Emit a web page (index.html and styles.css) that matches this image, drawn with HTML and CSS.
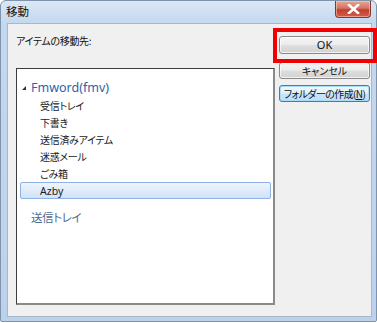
FILE: index.html
```html
<!DOCTYPE html>
<html lang="ja">
<head>
<meta charset="utf-8">
<title>移動</title>
<link rel="stylesheet" href="styles.css">
</head>
<body>
<div class="window">
  <div class="titlebar">
    <span class="title">移動</span>
    <div class="close"><svg width="13" height="10" viewBox="0 0 13 10"><path d="M2 1 L11 9 M11 1 L2 9" stroke="#fff" stroke-width="2.6" stroke-linecap="square"/></svg></div>
  </div>
  <div class="client">
    <div class="left">
      <div class="label">アイテムの移動先:</div>
      <div class="tree">
        <div class="root"><span class="arrow"></span>Fmword(fmv)</div>
        <div class="item">受信トレイ</div>
        <div class="item">下書き</div>
        <div class="item">送信済みアイテム</div>
        <div class="item">迷惑メール</div>
        <div class="item">ごみ箱</div>
        <div class="item selected">Azby</div>
        <div class="root2">送信トレイ</div>
      </div>
    </div>
    <div class="buttons">
      <div class="btn ok">OK</div>
      <div class="btn cancel">キャンセル</div>
      <div class="btn focus">フォルダーの作成(<u>N</u>)</div>
    </div>
    <div class="highlight"></div>
  </div>
</div>
</body>
</html>
```
FILE: styles.css
```css
* { box-sizing: border-box; }
html, body { margin: 0; padding: 0; }
body {
  width: 377px;
  height: 323px;
  background: #ffffff;
  font-family: "Noto Sans CJK JP", "Noto Sans", sans-serif;
  font-feature-settings: "palt";
}
.window {
  width: 377px;
  height: 322px;
  display: flex;
  flex-direction: column;
  background: linear-gradient(180deg, #dbe7f5 0px, #c4d8ef 22px, #bcd2ec 100%);
  border: 1px solid #7f93ab;
  border-radius: 6px 6px 2px 2px;
}
.titlebar {
  height: 21px;
  display: flex;
  align-items: flex-start;
  justify-content: space-between;
  padding-left: 5px;
  padding-right: 5px;
}
.title {
  font-size: 11.5px;
  line-height: 20px;
  color: #111;
}
.close {
  width: 36px;
  height: 17px;
  border: 1px solid #7d3a34;
  border-top: none;
  border-radius: 0 0 4px 4px;
  background: linear-gradient(180deg, #e8a593 0%, #d47462 45%, #c0402f 55%, #d45c4a 100%);
  display: flex;
  align-items: center;
  justify-content: center;
  box-shadow: inset 0 0 0 1px rgba(255,220,210,0.5);
}
.client {
  position: relative;
  flex: 1;
  margin: 1px 4px 4px 6px;
  background: #f0f0f0;
  border: 1px solid #aab7c6;
  display: flex;
  padding: 0 0 11px 8px;
}
.left {
  display: flex;
  flex-direction: column;
  padding-top: 10px;
}
.label {
  font-size: 10px;
  line-height: 14px;
  letter-spacing: -0.3px;
  color: #111;
}
.tree {
  margin-top: 20px;
  width: 259px;
  flex: 1;
  background: #fff;
  border-top: 1px solid #3c3c3c;
  border-left: 1px solid #3c3c3c;
  border-right: 2px solid #8a8a8a;
  border-bottom: 2px solid #8a8a8a;
  padding: 10px 2px 0 3px;
}
.root {
  height: 18px;
  line-height: 18px;
  font-family: "Noto Sans", sans-serif;
  font-size: 12.5px;
  color: #2a64ad;
  padding-left: 11px;
  position: relative;
}
.arrow {
  position: absolute;
  left: 2px;
  top: 7px;
  width: 0;
  height: 0;
  border-left: 4px solid transparent;
  border-bottom: 4px solid #333;
}
.item {
  height: 17px;
  line-height: 16px;
  font-size: 10px;
  letter-spacing: -0.3px;
  color: #1a1a1a;
  padding-left: 19px;
  border: 1px solid transparent;
  border-radius: 2px;
}
.item.selected {
  font-family: "Noto Sans", sans-serif;
  font-size: 10.5px;
  letter-spacing: 0;
  background: linear-gradient(180deg, #eef5fd 0%, #dceaf9 60%, #d0e3f7 100%);
  border-color: #8db2e3;
}
.root2 {
  margin-top: 9px;
  height: 18px;
  line-height: 18px;
  font-size: 11.5px;
  letter-spacing: -0.4px;
  color: #4e6a8c;
  padding-left: 11px;
}
.buttons {
  display: flex;
  flex-direction: column;
  margin-left: 4px;
  padding-top: 12px;
}
.btn {
  width: 91px;
  height: 18px;
  border: 1px solid #8a8a8a;
  border-radius: 3px;
  background: linear-gradient(180deg, #f4f4f4 0%, #ececec 48%, #dedede 52%, #d2d2d2 100%);
  box-shadow: inset 0 0 0 1px rgba(255,255,255,0.7);
  font-size: 10px;
  line-height: 16px;
  text-align: center;
  white-space: nowrap;
  color: #111;
}
.btn.ok {
  font-family: "Noto Sans", sans-serif;
  font-size: 11px;
}
.btn.cancel {
  margin-top: 8px;
  height: 17px;
  line-height: 15px;
}
.btn.focus {
  margin-top: 6px;
  height: 17px;
  line-height: 15px;
  border-color: #3c7fb1;
  box-shadow: inset 0 0 0 1px #a8dcf6;
  background: linear-gradient(180deg, #f0f8fd 0%, #e0f0fb 48%, #c8e5f7 52%, #bfdef4 100%);
  letter-spacing: -0.6px;
}
.btn u { text-decoration: underline; }
.highlight {
  position: absolute;
  left: 265px;
  top: 4px;
  width: 104px;
  height: 35px;
  border: 4px solid #f00000;
}
```
